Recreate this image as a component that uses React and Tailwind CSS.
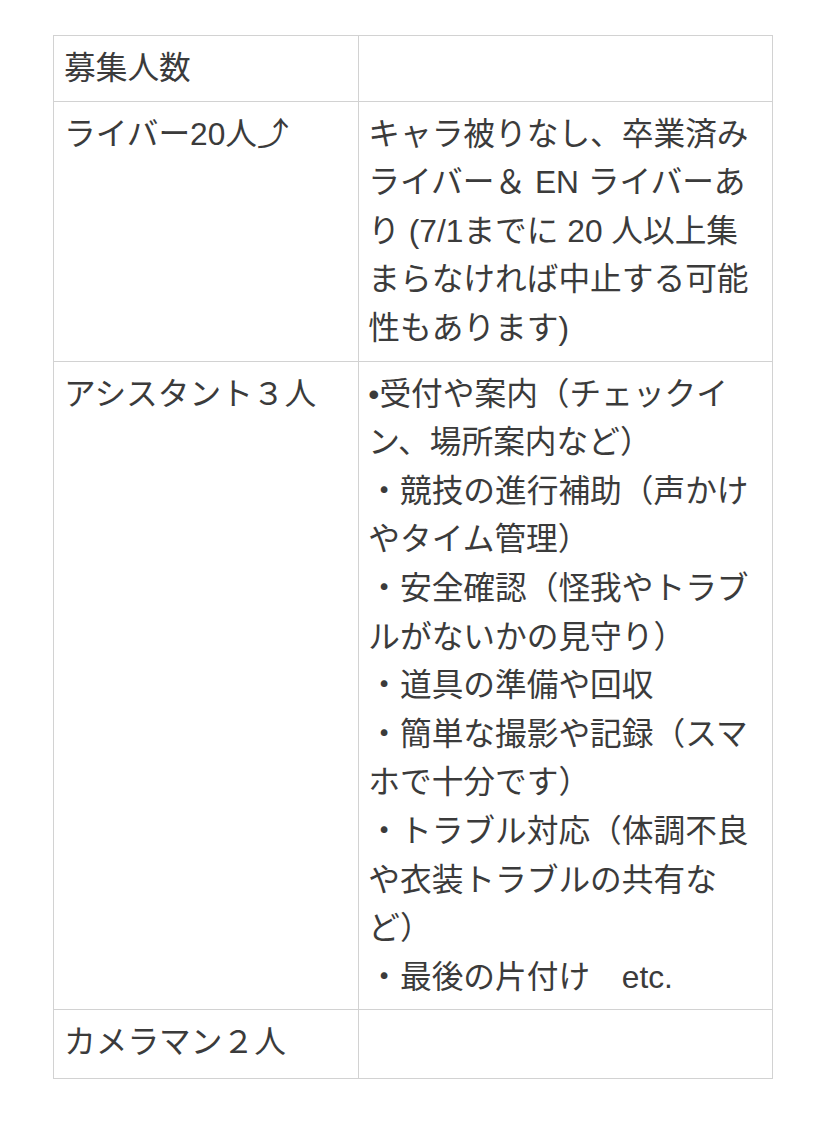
import React from "react";

const font = {
  fontFamily: '"Liberation Sans", "Noto Sans CJK JP", "DejaVu Sans", sans-serif',
};

function Lines({ lines }) {
  return (
    <div>
      {lines.map((l, i) => (
        <div key={i} className="whitespace-pre">
          {l}
        </div>
      ))}
    </div>
  );
}

export default function App() {
  const rows = [
    { left: ["募集人数"], right: [""] },
    {
      left: ["ライバー20人⤴"],
      right: [
        "キャラ被りなし、卒業済み",
        "ライバー＆ EN ライバーあ",
        "り (7/1までに 20 人以上集",
        "まらなければ中止する可能",
        "性もあります)",
      ],
    },
    {
      left: ["アシスタント３人"],
      right: [
        "•受付や案内（チェックイ",
        "ン、場所案内など）",
        "・競技の進行補助（声かけ",
        "やタイム管理）",
        "・安全確認（怪我やトラブ",
        "ルがないかの見守り）",
        "・道具の準備や回収",
        "・簡単な撮影や記録（スマ",
        "ホで十分です）",
        "・トラブル対応（体調不良",
        "や衣装トラブルの共有な",
        "ど）",
        "・最後の片付け　etc.",
      ],
    },
    { left: ["カメラマン２人"], right: [""], last: true },
  ];

  return (
    <div className="min-h-[1126px] w-[827px] bg-white pl-[53px] pt-[35px]" style={font}>
      <table className="w-[720px] border-collapse border border-[#d2d2d2] text-[31.7px] leading-[48.6px] text-[#3b3b3b]">
        <colgroup>
          <col className="w-[306px]" />
          <col className="w-[414px]" />
        </colgroup>
        <tbody>
          {rows.map((r, i) => (
            <tr key={i} className={r.last ? "h-[69px]" : ""}>
              <td className="border border-[#d2d2d2] pl-[10px] pr-2 pt-[8px] pb-[8px] align-top">
                <Lines lines={r.left} />
              </td>
              <td className="border border-[#d2d2d2] pl-[9px] pr-2 pt-[8px] pb-[8px] align-top">
                {r.right[0] === "" ? <div className="h-[48.6px]" /> : <Lines lines={r.right} />}
              </td>
            </tr>
          ))}
        </tbody>
      </table>
    </div>
  );
}
